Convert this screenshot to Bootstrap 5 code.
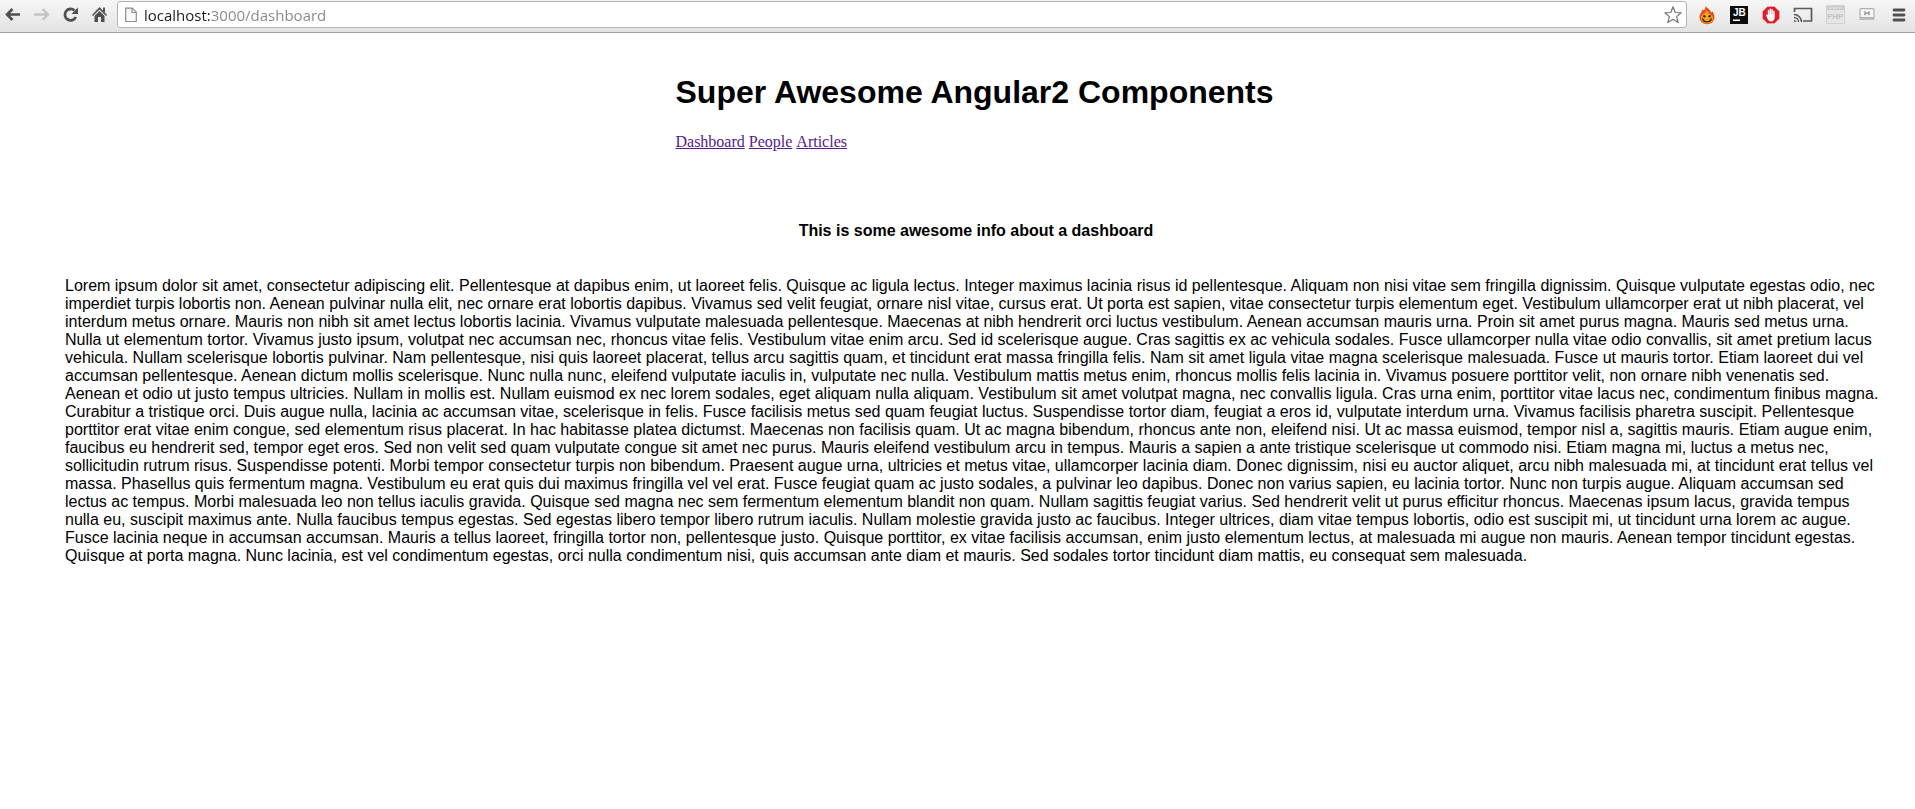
<!DOCTYPE html>
<html lang="en">
<head>
<meta charset="utf-8">
<meta name="viewport" content="width=device-width, initial-scale=1">
<title>Super Awesome Angular2 Components</title>
<link href="https://cdn.jsdelivr.net/npm/bootstrap@5.3.0/dist/css/bootstrap.min.css" rel="stylesheet">
<style>
  body { font-family: "Liberation Sans", Arial, sans-serif; font-size: 16px; line-height: 18px; color: #000; background: #fff; }
  .toolbar { background: linear-gradient(#f6f6f6, #e3e3e3); border-bottom: 1px solid #a0a0a0; padding: 1px 0 4px 5px; }
  .tool { border: 0; background: none; padding: 0; display: flex; align-items: center; justify-content: center; }
  .tool svg, .omnibox svg { display: block; }
  .tools-left { gap: 13px; }
  .tools-right .tool { width: 32px; height: 26px; }
  .omnibox { height: 27px; margin: 0 4px 0 9px; padding: 0 4px 0 7px; background: #fff; border: 1px solid #b4b4b4; border-radius: 3px; }
  .address { border: 0; outline: 0; padding: 0; margin-left: 7px; height: 22px; font: 15px "Open Sans", "Noto Sans", sans-serif; color: #868686;
    background: linear-gradient(90deg, #1c1c1c 67px, #868686 67px); -webkit-background-clip: text; background-clip: text; -webkit-text-fill-color: transparent; }
  .page-head { padding: 41px 3px 0 0; }
  .page-head h1 { font-size: 32px; line-height: 37px; font-weight: 700; margin: 0 0 22px; }
  .page-links { font-family: "Liberation Serif", "Times New Roman", serif; gap: 4px; }
  .page-links a { color: #551a8b; }
  .page-body { padding: 0 28px 0 65px; }
  .page-body h2 { font-size: 16px; line-height: 18px; font-weight: 700; margin: 71px 0 37px; }
  .page-main { padding-bottom: 48px; }
</style>
</head>
<body>
<header class="toolbar d-flex align-items-center">
  <nav class="tools-left d-flex" aria-label="Navigation">
    <button class="tool" type="button" aria-label="Back"><svg width="16" height="16" viewBox="0 0 16 16" fill="none" stroke="#505050" stroke-width="2.6"><path d="M15 7.500H2M7.500 2L2 7.500 7.500 13"/></svg></button>
    <button class="tool" type="button" aria-label="Forward"><svg width="16" height="16" viewBox="0 0 16 16" fill="none" stroke="#c4c4c4" stroke-width="2.400"><path d="M0 7.500h13.500M8.500 2L14 7.500 8.500 13"/></svg></button>
    <button class="tool" type="button" aria-label="Reload"><svg width="16" height="16" viewBox="0 0 16 16"><path d="M12.800 10A5.700 5.700 0 1 1 11.500 3.500" fill="none" stroke="#505050" stroke-width="2.800"/><path d="M15 .5V7H8.500z" fill="#505050"/></svg></button>
    <button class="tool" type="button" aria-label="Home"><svg width="16" height="16" viewBox="0 0 16 16" fill="#505050"><path d="M7.500 0L15 8l-1 1L7.500 2.500 1 9 0 8z"/><path d="M11 .5h2V6l-2-2zM2.500 9l5-5 5 5v6H9V10H6v5H2.500z"/></svg></button>
  </nav>
  <div class="omnibox d-flex align-items-center flex-grow-1">
    <svg width="12" height="16" viewBox="0 0 12 16" aria-hidden="true"><path d="M.7 1.200h6.600l4 4v9.300H.7z" fill="#fafafa" stroke="#8c8c8c" stroke-width="1.200"/><path d="M7 1.200v4.300h4.300" fill="none" stroke="#8c8c8c" stroke-width="1.200"/></svg>
    <input class="address flex-grow-1" type="text" value="localhost:3000/dashboard" aria-label="Address" spellcheck="false">
    <button class="tool" type="button" aria-label="Bookmark this page"><svg width="18" height="18" viewBox="0 0 18 18"><path d="M9 .8l2.200 5.700 6 .3-4.600 3.800 1.600 6L9 13.300l-5.200 3.300 1.600-6L.8 6.800l6-.3z" fill="#fff" stroke="#757575" stroke-width="1.200" stroke-linejoin="round"/></svg></button>
  </div>
  <div class="tools-right d-flex">
    <button class="tool" type="button" aria-label="Flame"><svg width="16" height="20" viewBox="0 0 16 20"><path d="M6.500 1c.5 2-1 3-1.500 4.500L3 4.500C3.500 7 .5 8.500.5 12.500a7.500 6.800 0 0 0 15 0c0-2.500-1.500-4-1.500-6l-2 1C11.500 4.500 8.500 3.500 6.500 1z" fill="#e84c1c"/><path d="M7.500 5c1 2 4 4 5.500 7a5 6 0 0 1-10.500 0C3 9 7 8 7.500 5z" fill="#f7931e"/><ellipse cx="8" cy="13.500" rx="6" ry="5" fill="#f9a51c"/><path d="M3.500 13.500c1.500 4.500 7.500 4.500 9 0" fill="none" stroke="#3d2208" stroke-width="1.400"/><circle cx="5.300" cy="11.300" r="1.200" fill="#3d2208"/><circle cx="10.700" cy="11.300" r="1.200" fill="#3d2208"/></svg></button>
    <button class="tool" type="button" aria-label="JetBrains"><svg width="18" height="18" viewBox="0 0 18 18"><path d="M0 0h18v18H0z" fill="#0b0b0b"/><text x="3" y="10" font-family="Liberation Sans, sans-serif" font-size="10" font-weight="700" fill="#fff">JB</text><path d="M3 13.500h7V15H3z" fill="#fff"/></svg></button>
    <button class="tool" type="button" aria-label="AdBlock"><svg width="18" height="18" viewBox="0 0 18 18"><path d="M5.500.5h7l5 5v7l-5 5h-7l-5-5v-7z" fill="#dc1e28" stroke="#efb0b0" stroke-width=".6"/><path d="M4.300 9.800c-.6-1.500 1-1.800 1.500-.6V4.500c0-1 1.500-1 1.500 0V8h.3V3.200c0-1 1.500-1 1.500 0V8h.3V3.700c0-1 1.500-1 1.500 0v4.800h.3V5.400c0-1 1.500-1 1.500 0v5.600c0 2.700-1.300 4.500-3.500 4.500-2.800 0-3.500-2.300-4.900-5.700z" fill="#fff"/></svg></button>
    <button class="tool" type="button" aria-label="Cast"><svg width="20" height="16" viewBox="0 0 20 16" fill="none" stroke="#5a5a5a"><path d="M1.500 5V1.500h17V14H10" stroke-width="1.700"/><path d="M1 7.500a7.500 7.500 0 0 1 7.500 7.500M1 10.500A4.500 4.500 0 0 1 5.500 15" stroke-width="1.500"/><path d="M1 13a2 2 0 0 1 2 2H1z" fill="#5a5a5a" stroke="none"/></svg></button>
    <button class="tool" type="button" aria-label="PHP console"><svg width="19" height="19" viewBox="0 0 19 19"><path d="M.5.5h18v18H.5z" fill="#e6e6e6" stroke="#d2d2d2"/><path d="M1 1h17v4H1z" fill="#cdcdcd"/><path d="M3 3h8" stroke="#e4e4e4"/><path d="M13 3h4" stroke="#f2f2f2" stroke-dasharray="1"/><text x="1" y="14" font-family="Liberation Sans, sans-serif" font-size="8" font-weight="700" fill="#c2c2c2">PHP</text></svg></button>
    <button class="tool" type="button" aria-label="Hangouts"><svg width="16" height="13" viewBox="0 0 16 13"><rect x="1" y=".7" width="14" height="9" rx="1" fill="#f5f5f5" stroke="#b0b0b0" stroke-width="1.200"/><path d="M.5 10h15v2H.5z" fill="#bdbdbd"/><path d="M6 3.200v4M10 3.200v4M6 5.200h4" stroke="#999" stroke-width="1.500"/></svg></button>
    <button class="tool" type="button" aria-label="Menu"><svg width="14" height="14" viewBox="0 0 14 14" stroke="#505050" stroke-width="2.800" stroke-linecap="round"><path d="M2 2h10M2 7h10M2 12h10"/></svg></button>
  </div>
</header>

<main class="page-main">
  <div class="page-body d-flex flex-column align-items-center">
    <div class="page-head">
      <h1>Super Awesome Angular2 Components</h1>
      <nav class="page-links d-flex" aria-label="Main">
        <a href="#dashboard">Dashboard</a>
        <a href="#people">People</a>
        <a href="#articles">Articles</a>
      </nav>
    </div>
    <h2>This is some awesome info about a dashboard</h2>
    <p class="m-0">Lorem ipsum dolor sit amet, consectetur adipiscing elit. Pellentesque at dapibus enim, ut laoreet felis. Quisque ac ligula lectus. Integer maximus lacinia risus id pellentesque. Aliquam non nisi vitae sem fringilla dignissim. Quisque vulputate egestas odio, nec imperdiet turpis lobortis non. Aenean pulvinar nulla elit, nec ornare erat lobortis dapibus. Vivamus sed velit feugiat, ornare nisl vitae, cursus erat. Ut porta est sapien, vitae consectetur turpis elementum eget. Vestibulum ullamcorper erat ut nibh placerat, vel interdum metus ornare. Mauris non nibh sit amet lectus lobortis lacinia. Vivamus vulputate malesuada pellentesque. Maecenas at nibh hendrerit orci luctus vestibulum. Aenean accumsan mauris urna. Proin sit amet purus magna. Mauris sed metus urna. Nulla ut elementum tortor. Vivamus justo ipsum, volutpat nec accumsan nec, rhoncus vitae felis. Vestibulum vitae enim arcu. Sed id scelerisque augue. Cras sagittis ex ac vehicula sodales. Fusce ullamcorper nulla vitae odio convallis, sit amet pretium lacus vehicula. Nullam scelerisque lobortis pulvinar. Nam pellentesque, nisi quis laoreet placerat, tellus arcu sagittis quam, et tincidunt erat massa fringilla felis. Nam sit amet ligula vitae magna scelerisque malesuada. Fusce ut mauris tortor. Etiam laoreet dui vel accumsan pellentesque. Aenean dictum mollis scelerisque. Nunc nulla nunc, eleifend vulputate iaculis in, vulputate nec nulla. Vestibulum mattis metus enim, rhoncus mollis felis lacinia in. Vivamus posuere porttitor velit, non ornare nibh venenatis sed. Aenean et odio ut justo tempus ultricies. Nullam in mollis est. Nullam euismod ex nec lorem sodales, eget aliquam nulla aliquam. Vestibulum sit amet volutpat magna, nec convallis ligula. Cras urna enim, porttitor vitae lacus nec, condimentum finibus magna. Curabitur a tristique orci. Duis augue nulla, lacinia ac accumsan vitae, scelerisque in felis. Fusce facilisis metus sed quam feugiat luctus. Suspendisse tortor diam, feugiat a eros id, vulputate interdum urna. Vivamus facilisis pharetra suscipit. Pellentesque porttitor erat vitae enim congue, sed elementum risus placerat. In hac habitasse platea dictumst. Maecenas non facilisis quam. Ut ac magna bibendum, rhoncus ante non, eleifend nisi. Ut ac massa euismod, tempor nisl a, sagittis mauris. Etiam augue enim, faucibus eu hendrerit sed, tempor eget eros. Sed non velit sed quam vulputate congue sit amet nec purus. Mauris eleifend vestibulum arcu in tempus. Mauris a sapien a ante tristique scelerisque ut commodo nisi. Etiam magna mi, luctus a metus nec, sollicitudin rutrum risus. Suspendisse potenti. Morbi tempor consectetur turpis non bibendum. Praesent augue urna, ultricies et metus vitae, ullamcorper lacinia diam. Donec dignissim, nisi eu auctor aliquet, arcu nibh malesuada mi, at tincidunt erat tellus vel massa. Phasellus quis fermentum magna. Vestibulum eu erat quis dui maximus fringilla vel vel erat. Fusce feugiat quam ac justo sodales, a pulvinar leo dapibus. Donec non varius sapien, eu lacinia tortor. Nunc non turpis augue. Aliquam accumsan sed lectus ac tempus. Morbi malesuada leo non tellus iaculis gravida. Quisque sed magna nec sem fermentum elementum blandit non quam. Nullam sagittis feugiat varius. Sed hendrerit velit ut purus efficitur rhoncus. Maecenas ipsum lacus, gravida tempus nulla eu, suscipit maximus ante. Nulla faucibus tempus egestas. Sed egestas libero tempor libero rutrum iaculis. Nullam molestie gravida justo ac faucibus. Integer ultrices, diam vitae tempus lobortis, odio est suscipit mi, ut tincidunt urna lorem ac augue. Fusce lacinia neque in accumsan accumsan. Mauris a tellus laoreet, fringilla tortor non, pellentesque justo. Quisque porttitor, ex vitae facilisis accumsan, enim justo elementum lectus, at malesuada mi augue non mauris. Aenean tempor tincidunt egestas. Quisque at porta magna. Nunc lacinia, est vel condimentum egestas, orci nulla condimentum nisi, quis accumsan ante diam et mauris. Sed sodales tortor tincidunt diam mattis, eu consequat sem malesuada.</p>
  </div>
</main>
<script src="https://cdn.jsdelivr.net/npm/bootstrap@5.3.0/dist/js/bootstrap.bundle.min.js"></script>
</body>
</html>
